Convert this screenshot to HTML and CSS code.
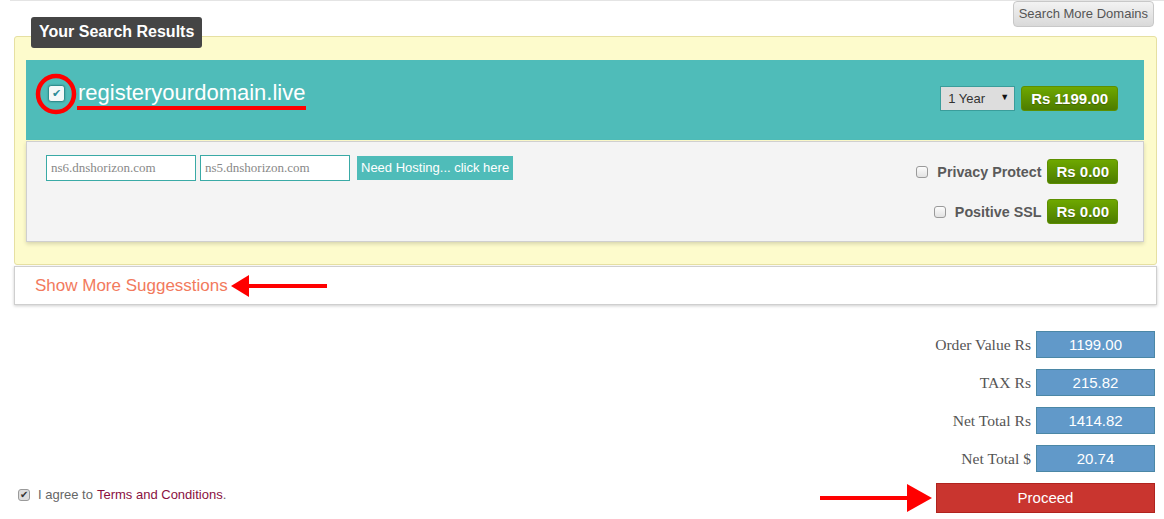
FILE: index.html
```html
<!DOCTYPE html>
<html lang="en">
<head>
    <meta charset="UTF-8">
    <meta name="viewport" content="width=device-width, initial-scale=1.0">
    <title>Your Search Results</title>
    <link rel="stylesheet" href="styles.css">
</head>
<body>

<div class="topline"></div>
<div class="toolbar">
    <button class="btn-more">Search More Domains</button>
</div>

<div class="results">
    <span class="results-title">Your Search Results</span>

    <div class="domain-head">
        <div class="domain-name">
            <span class="mark-wrap">
                <span class="check-box">&#10004;</span>
                <svg class="ring" width="46" height="46" viewBox="0 0 46 46"><circle cx="23" cy="23" r="18" fill="none" stroke="#f00" stroke-width="4.5"/></svg>
            </span>
            <span class="domain-text">registeryourdomain.live</span>
        </div>
        <div class="domain-buy">
            <span class="select-wrap">
                <select class="years">
                    <option>1 Year</option>
                    <option>2 Years</option>
                </select>
            </span>
            <span class="price">Rs 1199.00</span>
        </div>
    </div>

    <div class="domain-body">
        <div class="ns">
            <input type="text" class="ns-input" placeholder="ns6.dnshorizon.com">
            <input type="text" class="ns-input" placeholder="ns5.dnshorizon.com">
            <a class="hosting" href="#">Need Hosting... click here</a>
        </div>
        <div class="addons">
            <div class="addon">
                <span class="cbox"></span>
                <span class="addon-name">Privacy Protect</span>
                <span class="price">Rs 0.00</span>
            </div>
            <div class="addon">
                <span class="cbox"></span>
                <span class="addon-name">Positive SSL</span>
                <span class="price">Rs 0.00</span>
            </div>
        </div>
    </div>
</div>

<div class="suggest">
    <a class="suggest-link" href="#">Show More Suggesstions</a>
    <svg class="arrow-left" width="98" height="24" viewBox="0 0 98 24"><polygon points="0,12 18,1 18,23" fill="#f00"/><rect x="16" y="10" width="80" height="4" fill="#f00"/></svg>
</div>

<div class="totals">
    <div class="total-row"><span class="total-label">Order Value Rs</span><span class="total-value">1199.00</span></div>
    <div class="total-row"><span class="total-label">TAX Rs</span><span class="total-value">215.82</span></div>
    <div class="total-row"><span class="total-label">Net Total Rs</span><span class="total-value">1414.82</span></div>
    <div class="total-row"><span class="total-label">Net Total $</span><span class="total-value">20.74</span></div>
</div>

<div class="bottom">
    <div class="agree">
        <span class="cbox cbox-on">&#10004;</span>
        I agree to <a href="#" class="terms">Terms and Conditions</a>.
    </div>
    <div class="proceed-wrap">
        <svg class="arrow-right" width="114" height="30" viewBox="0 0 114 30"><rect x="0" y="13" width="92" height="4" fill="#f00"/><polygon points="112,15 87,1 87,29" fill="#f00"/></svg>
        <button class="proceed">Proceed</button>
    </div>
</div>

</body>
</html>
```

FILE: styles.css
```css
body {
    margin: 0;
    font-family: "Liberation Sans", Arial, sans-serif;
    background-color: #fff;
    color: #555;
}
.topline {
    margin-left: 10px;
    height: 1px;
    background-color: #e4e4e4;
}
.toolbar {
    display: flex;
    justify-content: flex-end;
    padding-right: 10px;
}
.btn-more {
    height: 26px;
    padding: 0 5px 1px;
    font-family: "Liberation Sans", Arial, sans-serif;
    font-size: 13px;
    color: #555;
    background: linear-gradient(#f3f3f3, #d9d9d9);
    border: 1px solid #c8c8c8;
    border-radius: 4px;
}

.results {
    position: relative;
    margin: 9px 7px 0 14px;
    padding: 23px 12px 22px 11px;
    background-color: #fdfbcc;
    border: 1px solid #e6e0a2;
    border-radius: 3px;
}
.results-title {
    position: absolute;
    top: -20px;
    left: 16px;
    padding: 0 8px;
    height: 31px;
    line-height: 30px;
    background-color: #454545;
    color: #fff;
    font-size: 16px;
    font-weight: bold;
    border-radius: 3px;
}

.domain-head {
    display: flex;
    justify-content: space-between;
    align-items: flex-start;
    height: 80px;
    padding: 0 26px 0 22px;
    background-color: #4fbcb9;
}
.domain-name {
    display: flex;
    align-items: center;
    margin-top: 20px;
    height: 26px;
}
.mark-wrap {
    position: relative;
    width: 17px;
    height: 17px;
    margin-right: 13px;
}
.check-box {
    display: block;
    width: 15px;
    height: 15px;
    line-height: 15px;
    text-align: center;
    font-size: 11px;
    color: #2c8c98;
    background-color: #f4f8f8;
    border: 1px solid #2f8f8f;
    border-radius: 3px;
    box-shadow: 0 0 2px rgba(0, 0, 0, 0.3);
}
.ring {
    position: absolute;
    top: -14px;
    left: -15px;
}
.domain-text {
    position: relative;
    font-size: 22px;
    line-height: 26px;
    color: #fff;
}
.domain-text::after {
    content: "";
    position: absolute;
    left: -1px;
    right: -1px;
    bottom: -4px;
    height: 4px;
    background-color: #f00;
}
.domain-buy {
    display: flex;
    align-items: center;
    margin-top: 26px;
}
.select-wrap {
    position: relative;
    margin-right: 6px;
}
.select-wrap::after {
    content: "\25BC";
    position: absolute;
    right: 6px;
    top: 6px;
    font-size: 9px;
    color: #111;
    pointer-events: none;
}
.years {
    appearance: none;
    -webkit-appearance: none;
    width: 75px;
    height: 25px;
    padding: 0 0 0 7px;
    font-family: "Liberation Sans", Arial, sans-serif;
    font-size: 13px;
    color: #333;
    background-color: #ddd;
    border: 1px solid #3a9d9b;
    border-radius: 0;
}
.price {
    display: inline-block;
    height: 23px;
    line-height: 24px;
    padding: 0 8px;
    font-size: 15px;
    font-weight: bold;
    color: #fff;
    background: linear-gradient(#6ea800, #4d7c00);
    border: 1px solid #5c8f00;
    border-radius: 3px;
    text-shadow: 0 1px 1px rgba(0, 0, 0, 0.25);
}
.domain-buy .price {
    padding: 0 9px;
}

.domain-body {
    display: flex;
    justify-content: space-between;
    align-items: flex-start;
    height: 86px;
    margin-top: 1px;
    padding: 13px 25px 0 19px;
    background-color: #f4f4f4;
    border: 1px solid #cfcfcf;
    box-shadow: 0 2px 4px rgba(0, 0, 0, 0.15);
}
.ns {
    display: flex;
    align-items: center;
}
.ns-input {
    box-sizing: border-box;
    width: 150px;
    height: 26px;
    margin-right: 4px;
    padding: 0 4px;
    font-family: "Liberation Serif", "Times New Roman", serif;
    font-size: 13px;
    background-color: #fff;
    border: 1px solid #3aaaa6;
    border-radius: 0;
}
.ns-input::placeholder {
    color: #888;
}
.hosting {
    display: inline-block;
    margin-left: 3px;
    padding: 0 4px;
    height: 24px;
    line-height: 24px;
    font-size: 13px;
    color: #fff;
    text-decoration: none;
    background-color: #4fbcb9;
}
.addons {
    display: flex;
    flex-direction: column;
    align-items: flex-end;
    gap: 15px;
    padding-top: 4px;
}
.addon {
    display: flex;
    align-items: center;
}
.cbox {
    display: inline-block;
    box-sizing: border-box;
    width: 12px;
    height: 12px;
    background: linear-gradient(#fcfcfc, #e2e2e2);
    border: 1px solid #9a9a9a;
    border-radius: 3px;
}
.addon .cbox {
    margin-right: 9px;
}
.addon-name {
    margin-right: 6px;
    font-size: 14.3px;
    font-weight: bold;
    color: #5a5a5a;
}

.suggest {
    display: flex;
    align-items: center;
    height: 37px;
    margin: 1px 7px 0 14px;
    padding-left: 20px;
    background-color: #fff;
    border: 1px solid #cfcfcf;
    box-shadow: 0 1px 3px rgba(0, 0, 0, 0.2);
}
.suggest-link {
    font-size: 17px;
    color: #f27a5d;
    text-decoration: none;
}
.arrow-left {
    margin-left: 3px;
}

.totals {
    display: flex;
    flex-direction: column;
    align-items: flex-end;
    gap: 11px;
    margin-top: 26px;
    padding-right: 9px;
}
.total-row {
    display: flex;
    align-items: center;
}
.total-label {
    margin-right: 5px;
    font-family: "Liberation Serif", "Times New Roman", serif;
    font-size: 15.6px;
    color: #555;
}
.total-value {
    box-sizing: border-box;
    width: 119px;
    height: 27px;
    line-height: 26px;
    text-align: center;
    font-size: 15px;
    color: #fff;
    background-color: #6199c9;
    border: 1px solid #4b87a6;
}

.bottom {
    display: flex;
    justify-content: space-between;
    align-items: flex-start;
    margin-top: 11px;
    padding: 0 9px 0 18px;
}
.agree {
    display: flex;
    align-items: center;
    padding-top: 4px;
    font-size: 13px;
    color: #666;
}
.agree .terms {
    margin-left: 4px;
    color: #8a0f3e;
    text-decoration: none;
}
.cbox-on {
    margin-right: 8px;
    line-height: 10px;
    font-size: 10px;
    text-align: center;
    color: #333;
    background: #ddd;
}
.proceed-wrap {
    display: flex;
    align-items: center;
}
.arrow-right {
    margin-right: 2px;
}
.proceed {
    width: 219px;
    height: 30px;
    padding-bottom: 2px;
    font-family: "Liberation Sans", Arial, sans-serif;
    font-size: 15px;
    color: #fff;
    background-color: #c9352f;
    border: 1px solid #b0231e;
    border-radius: 0;
}
```
